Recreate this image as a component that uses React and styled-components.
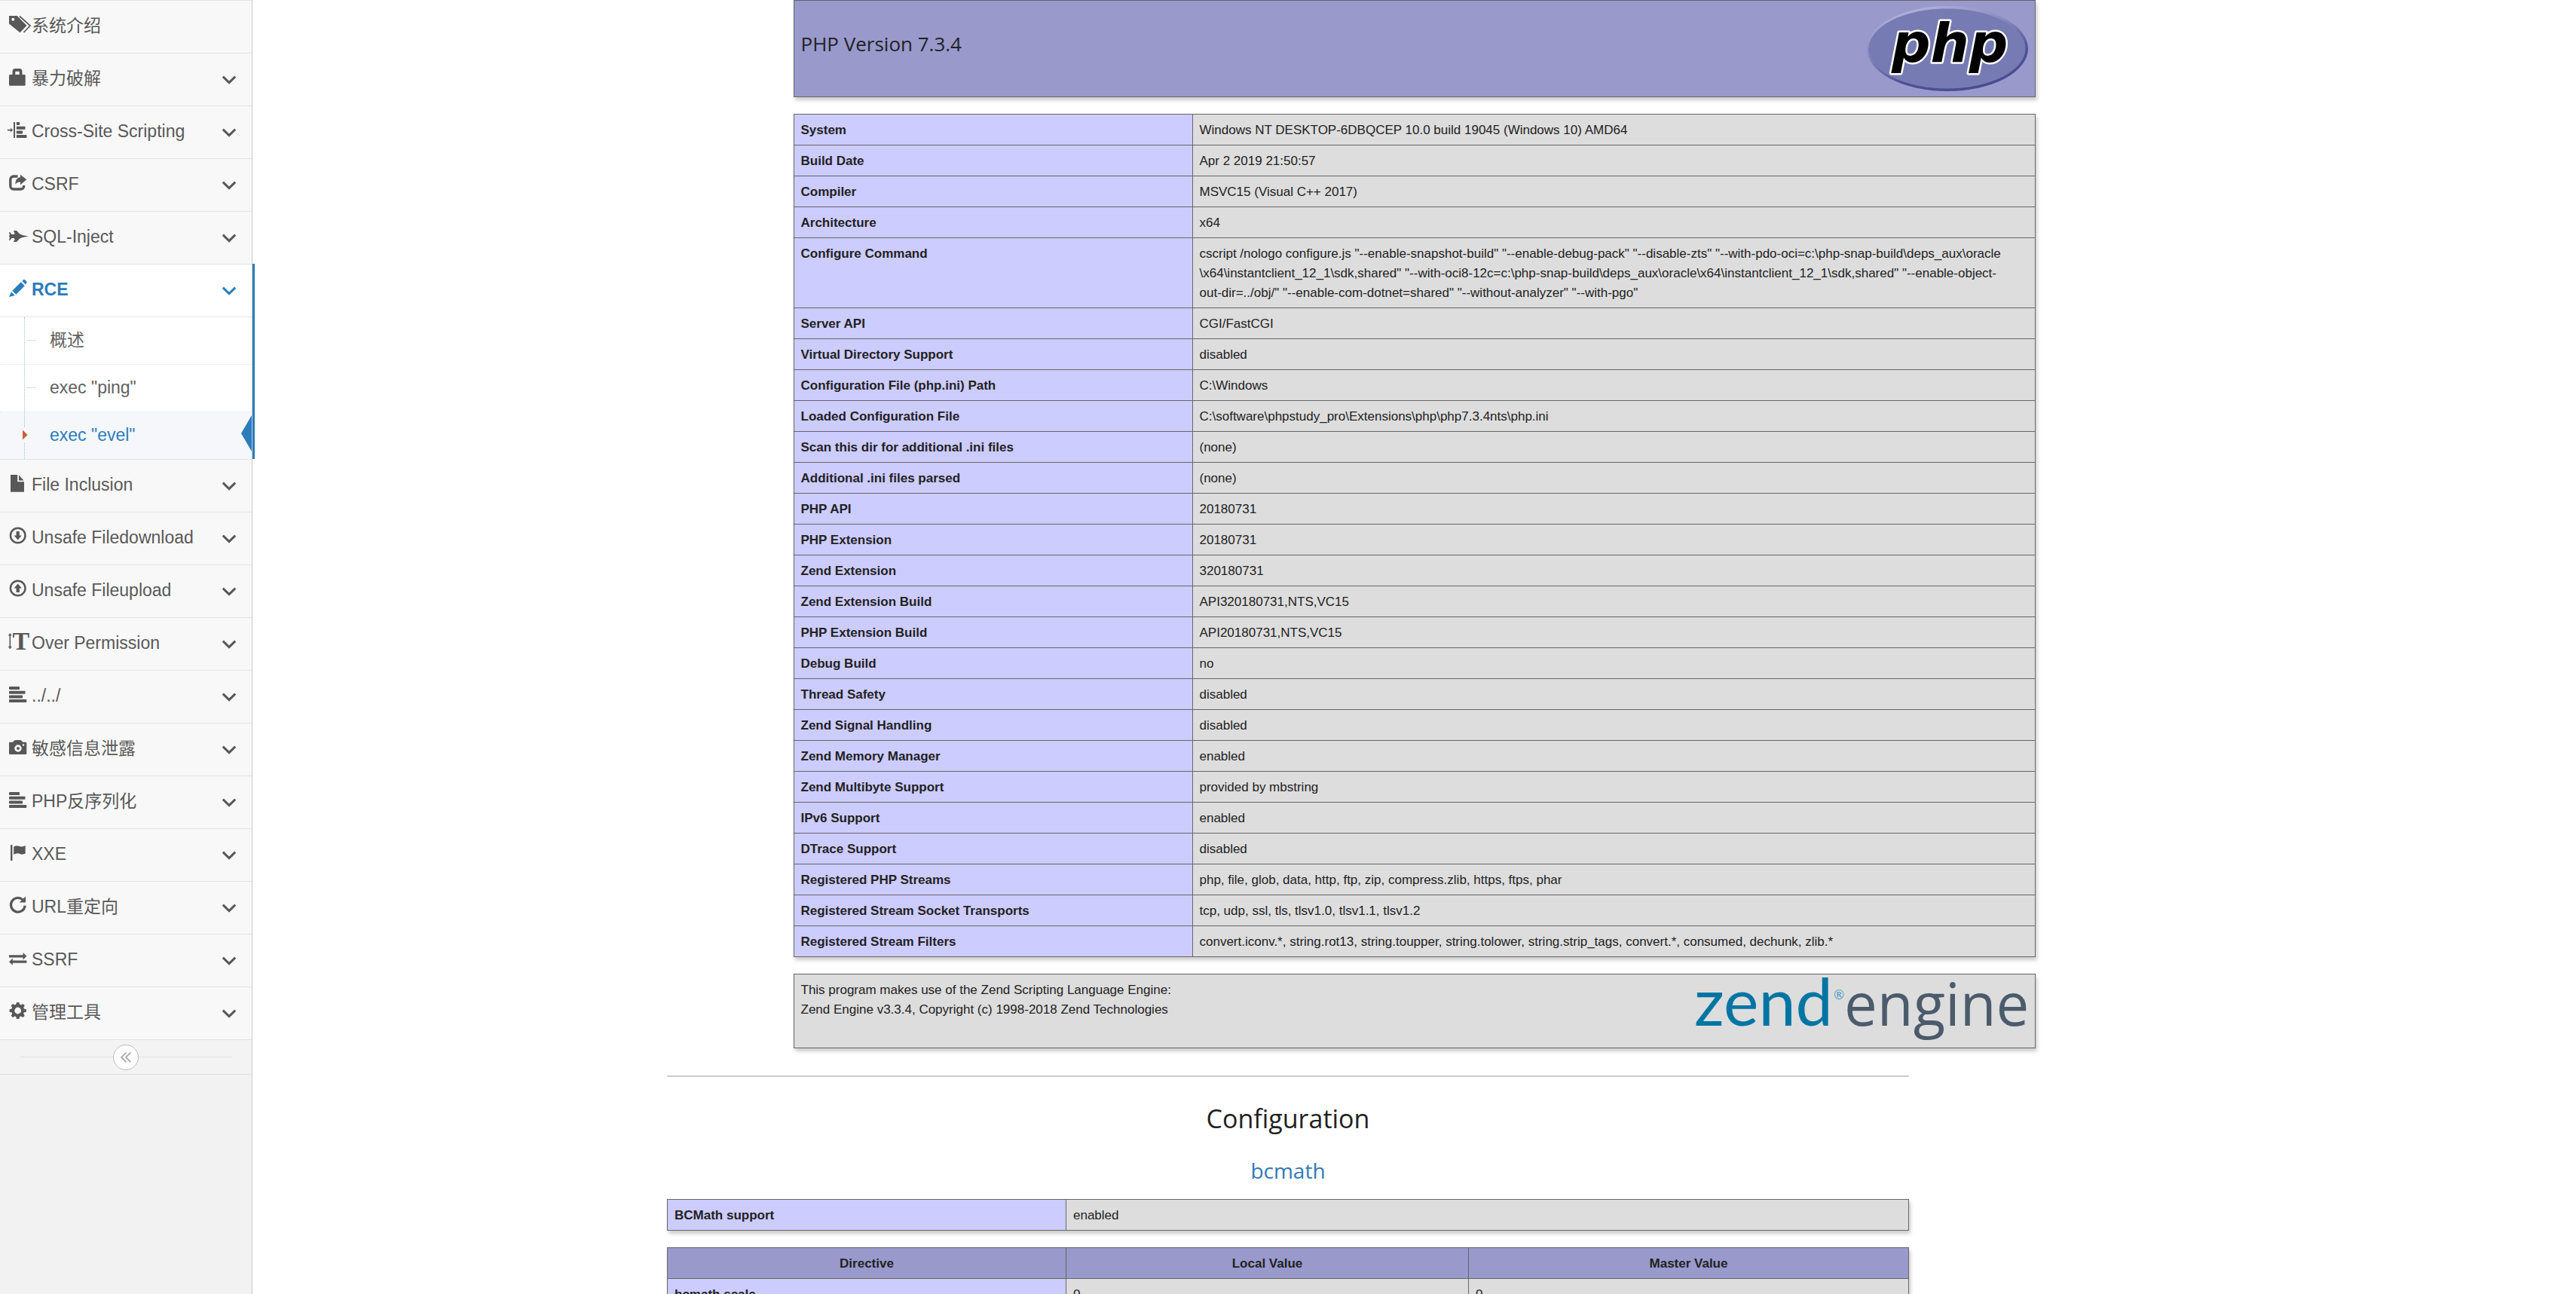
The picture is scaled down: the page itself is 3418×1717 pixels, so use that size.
import React, { Fragment } from "react";
import styled, { createGlobalStyle, css } from "styled-components";

const GlobalStyle = createGlobalStyle`
  *, *::before, *::after { box-sizing: border-box; }
  body {
    margin: 0;
    background: #fff;
    color: #222;
    font-family: "Liberation Sans", Arial, "Noto Sans CJK SC", sans-serif;
  }
`;

/* ---------- page frame ---------- */

const Shell = styled.div`
  display: flex;
  height: 100vh;
  overflow: hidden;
`;

const Sidebar = styled.nav`
  flex: 0 0 335px;
  background: #f2f2f2;
  border-right: 1px solid #ccc;
`;

const Content = styled.main`
  flex: 1;
  min-width: 0;
`;

/* ---------- sidebar ---------- */

const MenuList = styled.ul`
  list-style: none;
  margin: 0;
  padding: 0;
`;

const MenuItem = styled.li`
  position: relative;
  border-top: 1px solid #e4e4e4;
  background: ${(p) => (p.$active ? "#fff" : "#f8f8f8")};

  ${(p) =>
    p.$active &&
    css`
      &::after {
        content: "";
        position: absolute;
        top: -1px;
        bottom: 0;
        right: -4px;
        width: 3px;
        background: #2b7dbc;
      }
    `}
`;

const MenuLink = styled.a`
  display: flex;
  align-items: center;
  height: 69px;
  padding: 0 20px 0 10px;
  color: ${(p) => (p.$active ? "#2b7dbc" : "#585858")};
  font-size: 23px;
  font-weight: ${(p) => (p.$active ? 700 : 400)};
  line-height: 34px;
  text-decoration: none;
`;

const MenuLabel = styled.span`
  flex: 1;
  padding-bottom: 4px;
`;

const IconBox = styled.svg`
  flex: none;
  width: 32px;
  height: 31px;
  overflow: visible;
  fill: currentColor;
`;

const Chevron = styled.svg`
  flex: none;
  width: 20px;
  height: 12px;
  fill: none;
  stroke: currentColor;
  stroke-width: 3;
`;

const SubMenu = styled.ul`
  position: relative;
  list-style: none;
  margin: 0;
  padding: 0;
  border-top: 1px solid #e4e4e4;

  &::before {
    content: "";
    position: absolute;
    z-index: 1;
    top: 0;
    bottom: 0;
    left: 32px;
    border-left: 1px dotted #9dbdd6;
  }
`;

const SubItem = styled.li`
  position: relative;
  border-top: ${(p) => (p.$first ? "0" : "1px dotted #e4e4e4")};
`;

const SubLink = styled.a`
  display: flex;
  align-items: center;
  height: 62px;
  padding: 0 0 2px 66px;
  color: ${(p) => (p.$current ? "#2b7dbc" : "#616161")};
  background: ${(p) => (p.$current ? "#f5f7fa" : "#fff")};
  font-size: 23px;
  line-height: 34px;
  text-decoration: none;
`;

const Branch = styled.span`
  position: absolute;
  top: 30px;
  left: 36px;
  width: 11px;
  border-top: 1px dotted #9dbdd6;
`;

const CaretBox = styled.svg`
  position: absolute;
  z-index: 2;
  top: 20px;
  left: 29px;
  width: 8px;
  height: 20px;
`;

const CurrentArrow = styled.svg`
  position: absolute;
  top: 4px;
  right: 0;
  width: 14px;
  height: 48px;
  fill: #2b7dbc;
`;

const CollapseBar = styled.div`
  display: flex;
  align-items: center;
  justify-content: center;
  height: 47px;
  padding: 0 26px;
  border-top: 1px solid #e0e0e0;
  border-bottom: 1px solid #e0e0e0;
  background: #f3f3f3;

  &::before, &::after {
    content: "";
    flex: 1;
    border-top: 1px solid #e0e0e0;
  }
`;

const CollapseButton = styled.button`
  display: flex;
  align-items: center;
  justify-content: center;
  width: 34px;
  height: 34px;
  padding: 0;
  border: 1px solid #bbb;
  border-radius: 50%;
  background: #fff;
  color: #aaa;
`;

/* ---------- php info ---------- */

const Panels = styled.section`
  display: flex;
  flex-direction: column;
  align-items: center;
  gap: 22px;
`;

const panelFrame = css`
  width: 1648px;
  max-width: 100%;
  box-shadow: 2px 4px 5px #ccc;
`;

const Banner = styled.header`
  ${panelFrame}
  display: flex;
  justify-content: space-between;
  padding: 7px 9px;
  border: 1px solid #666;
  background: ${(p) => p.$tone};
  font-size: 17px;
  line-height: 26px;
`;

const VersionTitle = styled.h1`
  margin: 32px 0 0;
  font-family: "Open Sans", sans-serif;
  font-size: 26px;
  font-weight: 400;
  line-height: 36px;
`;

const Credits = styled.p`
  margin: 1px 0 0;
`;

const InfoTable = styled.table`
  ${panelFrame}
  table-layout: fixed;
  border-collapse: collapse;
  font-size: 17px;
  line-height: 26px;
`;

const NameCol = styled.col`
  width: 529px;
`;

const LocalCol = styled.col`
  width: 534px;
`;

const cellFrame = css`
  padding: 8px 9px 6px;
  border: 1px solid #666;
  vertical-align: baseline;
`;

const HeadCell = styled.th`
  ${cellFrame}
  background: #9999cc;
  text-align: center;
`;

const NameCell = styled.th`
  ${cellFrame}
  background: #ccccff;
  text-align: left;
`;

const ValueCell = styled.td`
  ${cellFrame}
  padding-right: 24px;
  background: #ddd;
`;

/* The configuration part is centred on the whole window, sidebar included. */
const Configuration = styled.section`
  display: flex;
  flex-direction: column;
  align-items: center;
  margin: 36px 335px 0 0;
`;

const ModuleTables = styled.div`
  display: flex;
  flex-direction: column;
  align-items: center;
  gap: 22px;
  width: 100%;
`;

const Divider = styled.hr`
  width: 1648px;
  max-width: 100%;
  height: 2px;
  margin: 0;
  border: 0;
  background: #ccc;
`;

const SectionTitle = styled.h1`
  margin: 31px 0 25px;
  font-family: "Open Sans", sans-serif;
  font-size: 34px;
  font-weight: 400;
  line-height: 48px;
`;

const ModuleTitle = styled.h2`
  margin: 0 0 18px;
  font-family: "Open Sans", sans-serif;
  font-size: 28px;
  font-weight: 400;
  line-height: 40px;
`;

const ModuleLink = styled.a`
  color: #337ab7;
  text-decoration: none;
`;

const PhpLogoSvg = styled.svg`
  flex: none;
  width: 214px;
  height: 113px;
`;

const ZendLogoSvg = styled.svg`
  flex: none;
  width: 441px;
  height: 83px;
  overflow: visible;
`;

/* ---------- icons ---------- */

const bars = (x, sizes) =>
  sizes.map((w, i) => (
    <rect key={i} x={x} y={[2, 7.8, 13.5, 19][i]} width={w} height="4" rx="0.8" />
  ));

const icons = {
  tags: (
    <>
      <path
        fillRule="evenodd"
        d="M2 1H12.8L25.5 14 16.5 23.3 2 11.5ZM7.3 3.7A2 2 0 1 0 7.3 7.7 2 2 0 1 0 7.3 3.7Z"
      />
      <path d="M16 1.5 30 14 21.5 23" fill="none" stroke="currentColor" strokeWidth="1.7" />
    </>
  ),
  lock: (
    <path
      fillRule="evenodd"
      d="M6.5 9V5A4 4 0 0 1 10.5 1H15.5A4 4 0 0 1 19.5 5V9H22.4A1.3 1.3 0 0 1 23.7 10.3V22.5A1.3 1.3 0 0 1 22.4 23.8H3.3A1.3 1.3 0 0 1 2 22.5V10.3A1.3 1.3 0 0 1 3.3 9ZM10.3 9H15.7V5.8A1 1 0 0 0 14.7 4.8H11.3A1 1 0 0 0 10.3 5.8Z"
    />
  ),
  indent: (
    <>
      <path d="M0 11.8H4V9.8L7.2 12.6 4 15.4V13.4H0Z" />
      <rect x="8" y="2" width="2" height="21" />
      {bars(11.8, [4.3, 11.7, 8.3, 13.7])}
    </>
  ),
  share: (
    <>
      <path
        d="M13.5 4H8A4.2 4.2 0 0 0 3.8 8.2V16.8A4.2 4.2 0 0 0 8 21H17.5A4.2 4.2 0 0 0 21.7 16.8V16"
        fill="none"
        stroke="currentColor"
        strokeWidth="3.4"
      />
      <path d="M17 1.8 25.3 8.3 17 15.2V11.6C14 11.4 12 12.6 10.4 14.4 10.4 9 12.6 5.6 17 5.2Z" />
    </>
  ),
  plane: (
    <path d="M2 8 3.2 8 5.5 11 8.6 11 9.6 9.8 8 6H12L16.2 10.6 20 11.9 27.5 13.5 20 15.1 16.2 16.4 12 21H8L9.6 17.2 8.6 16 5.5 16 3.2 19H2L3 14.8 2 14.2V12.8L3 12.2Z" />
  ),
  pencil: (
    <path d="M6.3 15.7 17.8 4.2 22.8 9.2 11.3 20.7ZM19.4 2.8 21.4 0.9Q22 0.4 22.6 0.9L25.4 3.7Q26 4.3 25.4 4.9L23.9 7.4ZM4.9 17.2 9.8 22 2 24Z" />
  ),
  file: <path d="M4 1H13.2V10.3H22V23.8H4ZM15 1.6 21.6 8.4H15Z" />,
  download: (
    <>
      <circle cx="13.7" cy="11.5" r="9.8" fill="none" stroke="currentColor" strokeWidth="2.5" />
      <path d="M11.6 6H15.8V11.5H18.8L13.7 17.5 8.6 11.5H11.6Z" />
    </>
  ),
  upload: (
    <>
      <circle cx="13.7" cy="11.5" r="9.8" fill="none" stroke="currentColor" strokeWidth="2.5" />
      <path d="M11.6 17H15.8V11.5H18.8L13.7 5.5 8.6 11.5H11.6Z" />
    </>
  ),
  textHeight: (
    <>
      <path d="M3.3 1 5.8 4.6H4.1V18.8H5.8L3.3 22.4 0.8 18.8H2.5V4.6H0.8Z" />
      <text x="6.5" y="23" fontFamily="Liberation Serif, serif" fontWeight="700" fontSize="34">
        T
      </text>
    </>
  ),
  alignLeft: bars(2, [14, 21.5, 18, 23.3]),
  camera: (
    <path
      fillRule="evenodd"
      d="M3.3 5.8H7L9 3.6Q9.5 3 10.3 3H17Q17.8 3 18.3 3.6L20.3 5.8H24Q25.3 5.8 25.3 7.1V20.7Q25.3 22 24 22H3.3Q2 22 2 20.7V7.1Q2 5.8 3.3 5.8ZM14 9.3A4.7 4.7 0 1 0 14 18.7 4.7 4.7 0 1 0 14 9.3ZM14 12A2 2 0 1 1 14 16 2 2 0 1 1 14 12ZM21 8.2A1.3 1.3 0 1 0 21 10.8 1.3 1.3 0 1 0 21 8.2Z"
    />
  ),
  flag: (
    <>
      <rect x="4" y="2" width="2.4" height="21" />
      <path d="M8.2 4.6Q12 2.4 15.5 3.8 19.5 5.4 23.7 3V13.6Q19.5 15.6 16 13.8 12.4 12.2 8.2 15Z" />
    </>
  ),
  repeat: (
    <>
      <path
        d="M20 4.6A9.4 9.4 0 1 0 23.2 12.8"
        fill="none"
        stroke="currentColor"
        strokeWidth="3.2"
      />
      <path d="M24 0.4V8.6H15.6Z" />
    </>
  ),
  transfer: (
    <>
      <path d="M2 8.2H20.5V5L25.4 9.8 20.5 14.4V11.4H2Z" />
      <path d="M25.4 15.6H6.8V12.6L2 17.2 6.8 21.8V18.8H25.4Z" />
    </>
  ),
  cog: (
    <>
      <circle cx="13.7" cy="12" r="6.4" fill="none" stroke="currentColor" strokeWidth="4" />
      {[0, 45, 90, 135, 180, 225, 270, 315].map((a) => (
        <path key={a} d="M10.9 5.5 12 0.9H15.4L16.5 5.5Z" transform={`rotate(${a} 13.7 12)`} />
      ))}
    </>
  ),
};

/* ---------- data ---------- */

const menu = [
  { icon: "tags", label: "系统介绍", leaf: true },
  { icon: "lock", label: "暴力破解" },
  { icon: "indent", label: "Cross-Site Scripting" },
  { icon: "share", label: "CSRF" },
  { icon: "plane", label: "SQL-Inject" },
  {
    icon: "pencil",
    label: "RCE",
    children: [
      { label: "概述" },
      { label: 'exec "ping"' },
      { label: 'exec "evel"', current: true },
    ],
  },
  { icon: "file", label: "File Inclusion" },
  { icon: "download", label: "Unsafe Filedownload" },
  { icon: "upload", label: "Unsafe Fileupload" },
  { icon: "textHeight", label: "Over Permission" },
  { icon: "alignLeft", label: "../../" },
  { icon: "camera", label: "敏感信息泄露" },
  { icon: "alignLeft", label: "PHP反序列化" },
  { icon: "flag", label: "XXE" },
  { icon: "repeat", label: "URL重定向" },
  { icon: "transfer", label: "SSRF" },
  { icon: "cog", label: "管理工具" },
];

const info = [
  ["System", "Windows NT DESKTOP-6DBQCEP 10.0 build 19045 (Windows 10) AMD64"],
  ["Build Date", "Apr 2 2019 21:50:57"],
  ["Compiler", "MSVC15 (Visual C++ 2017)"],
  ["Architecture", "x64"],
  [
    "Configure Command",
    'cscript /nologo configure.js "--enable-snapshot-build" "--enable-debug-pack" "--disable-zts" "--with-pdo-oci=c:\\php-snap-build\\deps_aux\\oracle\\x64\\instantclient_12_1\\sdk,shared" "--with-oci8-12c=c:\\php-snap-build\\deps_aux\\oracle\\x64\\instantclient_12_1\\sdk,shared" "--enable-object-out-dir=../obj/" "--enable-com-dotnet=shared" "--without-analyzer" "--with-pgo"',
  ],
  ["Server API", "CGI/FastCGI"],
  ["Virtual Directory Support", "disabled"],
  ["Configuration File (php.ini) Path", "C:\\Windows"],
  ["Loaded Configuration File", "C:\\software\\phpstudy_pro\\Extensions\\php\\php7.3.4nts\\php.ini"],
  ["Scan this dir for additional .ini files", "(none)"],
  ["Additional .ini files parsed", "(none)"],
  ["PHP API", "20180731"],
  ["PHP Extension", "20180731"],
  ["Zend Extension", "320180731"],
  ["Zend Extension Build", "API320180731,NTS,VC15"],
  ["PHP Extension Build", "API20180731,NTS,VC15"],
  ["Debug Build", "no"],
  ["Thread Safety", "disabled"],
  ["Zend Signal Handling", "disabled"],
  ["Zend Memory Manager", "enabled"],
  ["Zend Multibyte Support", "provided by mbstring"],
  ["IPv6 Support", "enabled"],
  ["DTrace Support", "disabled"],
  ["Registered PHP Streams", "php, file, glob, data, http, ftp, zip, compress.zlib, https, ftps, phar"],
  ["Registered Stream Socket Transports", "tcp, udp, ssl, tls, tlsv1.0, tlsv1.1, tlsv1.2"],
  [
    "Registered Stream Filters",
    "convert.iconv.*, string.rot13, string.toupper, string.tolower, string.strip_tags, convert.*, consumed, dechunk, zlib.*",
  ],
];

/* ---------- parts ---------- */

/* Long library paths may wrap in front of their architecture folder. */
function Breakable({ text }) {
  return text.split(/(?=\\x64)/).map((part, i) => (
    <Fragment key={i}>
      {i > 0 && <wbr />}
      {part}
    </Fragment>
  ));
}

function PairTable({ rows }) {
  return (
    <InfoTable>
      <colgroup>
        <NameCol />
        <col />
      </colgroup>
      <tbody>
        {rows.map(([name, value]) => (
          <tr key={name}>
            <NameCell scope="row">{name}</NameCell>
            <ValueCell>
              <Breakable text={value} />
            </ValueCell>
          </tr>
        ))}
      </tbody>
    </InfoTable>
  );
}

function MenuEntry({ entry }) {
  const active = Boolean(entry.children);
  return (
    <MenuItem $active={active}>
      <MenuLink href="#" $active={active}>
        <IconBox viewBox="0 0 32 31" aria-hidden="true">
          {icons[entry.icon]}
        </IconBox>
        <MenuLabel>{entry.label}</MenuLabel>
        {!entry.leaf && (
          <Chevron viewBox="0 0 20 12" aria-hidden="true">
            <path d="M1.8 1.6 10 9.6 18.2 1.6" />
          </Chevron>
        )}
      </MenuLink>
      {active && (
        <SubMenu>
          {entry.children.map((child, i) => (
            <SubItem key={child.label} $first={i === 0}>
              <SubLink href="#" $current={child.current}>
                {child.label}
              </SubLink>
              {child.current ? (
                <>
                  <CaretBox viewBox="0 0 8 20" aria-hidden="true">
                    <rect width="8" height="20" fill="#f5f7fa" />
                    <path d="M1 3.5 7.6 10 1 16.5Z" fill="#c86139" />
                  </CaretBox>
                  <CurrentArrow viewBox="0 0 14 48" aria-hidden="true">
                    <path d="M14 0V48L0 24Z" />
                  </CurrentArrow>
                </>
              ) : (
                <Branch />
              )}
            </SubItem>
          ))}
        </SubMenu>
      )}
    </MenuItem>
  );
}

function PhpLogo() {
  return (
    <PhpLogoSvg viewBox="0 0 214 113" role="img" aria-label="PHP logo">
      <defs>
        <linearGradient id="rim" x1="0.25" y1="0" x2="0.75" y2="1">
          <stop offset="0" stopColor="#b4b4dc" />
          <stop offset="0.4" stopColor="#8585bd" />
          <stop offset="0.7" stopColor="#4f5197" />
          <stop offset="1" stopColor="#484a90" />
        </linearGradient>
      </defs>
      <ellipse cx="107" cy="56.5" rx="107" ry="56.5" fill="url(#rim)" />
      <ellipse cx="106.5" cy="56.5" rx="104" ry="53" fill="#777bb3" />
      <text
        x="33"
        y="74"
        fontFamily="DejaVu Sans, sans-serif"
        fontSize="72"
        fontWeight="700"
        fontStyle="italic"
        fill="#000"
        stroke="#fff"
        strokeWidth="5"
        strokeLinejoin="round"
        paintOrder="stroke"
      >
        php
      </text>
    </PhpLogoSvg>
  );
}

function ZendLogo() {
  return (
    <ZendLogoSvg viewBox="0 0 441 83" role="img" aria-label="Zend Engine logo">
      <text x="-2" y="61" fontFamily="Lato, sans-serif" fontSize="88" fill="#0075a3">
        zend
      </text>
      <text x="183" y="26" fontFamily="Lato, sans-serif" fontSize="17" fill="#4a9cbd">
        ®
      </text>
      <text x="197" y="61" fontFamily="Open Sans, sans-serif" fontSize="78" fill="#4b5b6c">
        engine
      </text>
    </ZendLogoSvg>
  );
}

export default function App() {
  return (
    <Shell>
      <GlobalStyle />
      <Sidebar>
        <MenuList>
          {menu.map((entry) => (
            <MenuEntry key={entry.label} entry={entry} />
          ))}
        </MenuList>
        <CollapseBar>
          <CollapseButton type="button" aria-label="Collapse menu">
            <svg width="16" height="16" viewBox="0 0 16 16" fill="none" stroke="currentColor" strokeWidth="1.8">
              <path d="M8.4 1.6 2 8 8.4 14.4M14.4 1.6 8 8 14.4 14.4" />
            </svg>
          </CollapseButton>
        </CollapseBar>
      </Sidebar>
      <Content>
        <Panels>
          <Banner $tone="#9999cc">
            <VersionTitle>PHP Version 7.3.4</VersionTitle>
            <PhpLogo />
          </Banner>
          <PairTable rows={info} />
          <Banner as="section" $tone="#ddd">
            <Credits>
              This program makes use of the Zend Scripting Language Engine:
              <br />
              Zend Engine v3.3.4, Copyright (c) 1998-2018 Zend Technologies
            </Credits>
            <ZendLogo />
          </Banner>
        </Panels>
        <Configuration>
          <Divider />
          <SectionTitle>Configuration</SectionTitle>
          <ModuleTitle>
            <ModuleLink href="#module_bcmath">bcmath</ModuleLink>
          </ModuleTitle>
          <ModuleTables>
            <PairTable rows={[["BCMath support", "enabled"]]} />
            <InfoTable>
              <colgroup>
                <NameCol />
                <LocalCol />
                <col />
              </colgroup>
              <thead>
                <tr>
                  <HeadCell scope="col">Directive</HeadCell>
                  <HeadCell scope="col">Local Value</HeadCell>
                  <HeadCell scope="col">Master Value</HeadCell>
                </tr>
              </thead>
              <tbody>
                <tr>
                  <NameCell scope="row">bcmath.scale</NameCell>
                  <ValueCell>0</ValueCell>
                  <ValueCell>0</ValueCell>
                </tr>
              </tbody>
            </InfoTable>
          </ModuleTables>
        </Configuration>
      </Content>
    </Shell>
  );
}
